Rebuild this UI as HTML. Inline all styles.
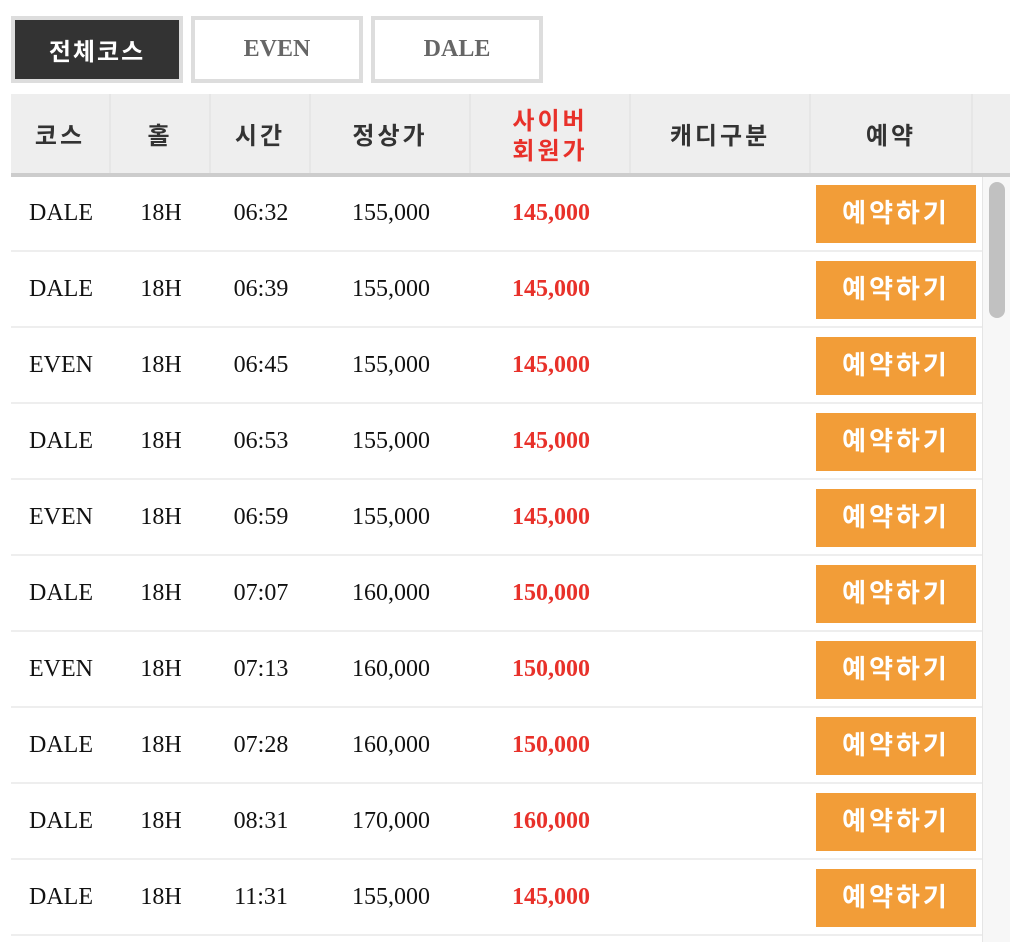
<!DOCTYPE html>
<html><head><meta charset="utf-8"><style>
*{margin:0;padding:0;box-sizing:border-box}
body{width:1018px;height:942px;background:#fff;font-family:"Liberation Serif","Noto Serif CJK SC","Noto Sans CJK KR",serif;position:relative;overflow:hidden}
.tab{position:absolute;top:16px;height:67px;width:172px;border:4px solid #ddd;background:#fff;color:#666;font-weight:bold;font-size:24px;text-align:center;line-height:59px}
.tab.on{background:#333;color:#fff;border-color:#ddd}
.hd{position:absolute;top:94px;left:11px;width:999px;height:83px;background:#eee;border-bottom:4px solid #ccc}
.hd div{position:absolute;top:0;height:79px;display:flex;align-items:center;justify-content:center;font-family:"Noto Sans CJK KR",sans-serif;font-weight:bold;font-size:24px;color:#333;letter-spacing:3px;border-right:2px solid #e6e6e6;line-height:30px;text-align:center}
.row{position:absolute;left:11px;width:971px;height:76px;border-bottom:2px solid #eee}
.row span{position:absolute;top:0;line-height:74px;font-size:24px;color:#111;text-align:center}
.row .r{color:#e8312a;font-weight:bold}
.btn{position:absolute;left:805px;top:9px;width:160px;height:58px;background:#f29d38;color:#fff;font-family:"Noto Sans CJK KR",sans-serif;font-weight:bold;font-size:26px;text-align:center;line-height:54px;letter-spacing:3px}
.sb{position:absolute;left:982px;top:177px;width:28px;height:765px;background:#f7f7f7;border-left:1px solid #e5e5e5}
.th{position:absolute;left:6px;top:5px;width:16px;height:136px;border-radius:8px;background:#c1c1c1}
</style></head><body>
<div class="tab on" style="left:11px;font-family:'Noto Sans CJK KR',sans-serif;letter-spacing:2px">전체코스</div>
<div class="tab" style="left:191px">EVEN</div>
<div class="tab" style="left:371px">DALE</div>
<div class="hd">
<div style="left:0;width:100px">코스</div>
<div style="left:100px;width:100px">홀</div>
<div style="left:200px;width:100px">시간</div>
<div style="left:300px;width:160px">정상가</div>
<div style="left:460px;width:160px;color:#e8312a">사이버<br>회원가</div>
<div style="left:620px;width:180px">캐디구분</div>
<div style="left:800px;width:162px">예약</div>
<div style="left:962px;width:37px;border:none"></div>
</div>
<div id="rows"></div>
<div class="sb"><div class="th"></div></div>
<div class="row" style="top:176px"><span style="left:0;width:100px">DALE</span><span style="left:100px;width:100px">18H</span><span style="left:200px;width:100px">06:32</span><span style="left:300px;width:160px">155,000</span><span class="r" style="left:460px;width:160px">145,000</span><div class="btn">예약하기</div></div>
<div class="row" style="top:252px"><span style="left:0;width:100px">DALE</span><span style="left:100px;width:100px">18H</span><span style="left:200px;width:100px">06:39</span><span style="left:300px;width:160px">155,000</span><span class="r" style="left:460px;width:160px">145,000</span><div class="btn">예약하기</div></div>
<div class="row" style="top:328px"><span style="left:0;width:100px">EVEN</span><span style="left:100px;width:100px">18H</span><span style="left:200px;width:100px">06:45</span><span style="left:300px;width:160px">155,000</span><span class="r" style="left:460px;width:160px">145,000</span><div class="btn">예약하기</div></div>
<div class="row" style="top:404px"><span style="left:0;width:100px">DALE</span><span style="left:100px;width:100px">18H</span><span style="left:200px;width:100px">06:53</span><span style="left:300px;width:160px">155,000</span><span class="r" style="left:460px;width:160px">145,000</span><div class="btn">예약하기</div></div>
<div class="row" style="top:480px"><span style="left:0;width:100px">EVEN</span><span style="left:100px;width:100px">18H</span><span style="left:200px;width:100px">06:59</span><span style="left:300px;width:160px">155,000</span><span class="r" style="left:460px;width:160px">145,000</span><div class="btn">예약하기</div></div>
<div class="row" style="top:556px"><span style="left:0;width:100px">DALE</span><span style="left:100px;width:100px">18H</span><span style="left:200px;width:100px">07:07</span><span style="left:300px;width:160px">160,000</span><span class="r" style="left:460px;width:160px">150,000</span><div class="btn">예약하기</div></div>
<div class="row" style="top:632px"><span style="left:0;width:100px">EVEN</span><span style="left:100px;width:100px">18H</span><span style="left:200px;width:100px">07:13</span><span style="left:300px;width:160px">160,000</span><span class="r" style="left:460px;width:160px">150,000</span><div class="btn">예약하기</div></div>
<div class="row" style="top:708px"><span style="left:0;width:100px">DALE</span><span style="left:100px;width:100px">18H</span><span style="left:200px;width:100px">07:28</span><span style="left:300px;width:160px">160,000</span><span class="r" style="left:460px;width:160px">150,000</span><div class="btn">예약하기</div></div>
<div class="row" style="top:784px"><span style="left:0;width:100px">DALE</span><span style="left:100px;width:100px">18H</span><span style="left:200px;width:100px">08:31</span><span style="left:300px;width:160px">170,000</span><span class="r" style="left:460px;width:160px">160,000</span><div class="btn">예약하기</div></div>
<div class="row" style="top:860px"><span style="left:0;width:100px">DALE</span><span style="left:100px;width:100px">18H</span><span style="left:200px;width:100px">11:31</span><span style="left:300px;width:160px">155,000</span><span class="r" style="left:460px;width:160px">145,000</span><div class="btn">예약하기</div></div>
</body></html>
